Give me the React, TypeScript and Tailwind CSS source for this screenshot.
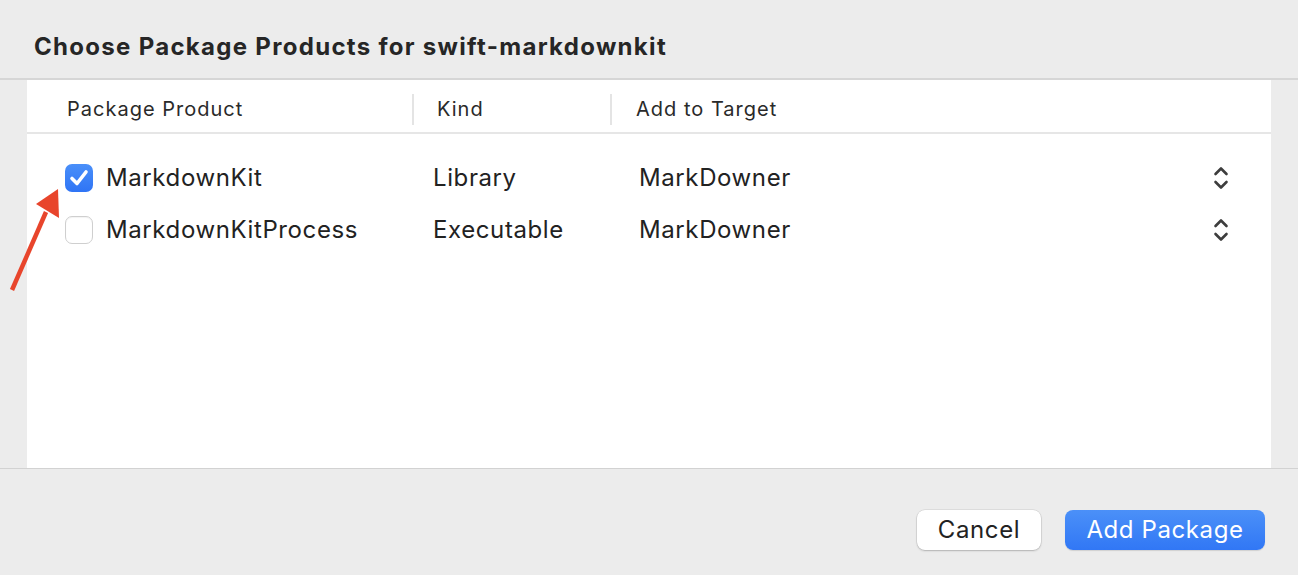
import React from "react";

const ROWS = [
  { name: "MarkdownKit", kind: "Library", target: "MarkDowner", checked: true },
  { name: "MarkdownKitProcess", kind: "Executable", target: "MarkDowner", checked: false },
];

const Checkbox: React.FC<{ checked: boolean }> = ({ checked }) =>
  checked ? (
    <div className="w-[28px] h-[28px] rounded-[7px] bg-gradient-to-b from-[#4a8ff9] to-[#2f74f5] flex items-center justify-center">
      <svg width="22" height="20" viewBox="0 0 22 20" fill="none">
        <path d="M4 10.5 L9 15.5 L18 4" stroke="white" strokeWidth="3.6" strokeLinecap="round" strokeLinejoin="round" />
      </svg>
    </div>
  ) : (
    <div className="w-[28px] h-[28px] rounded-[7px] bg-white border border-[#cfcfcf] shadow-[inset_0_1px_1px_rgba(0,0,0,0.05)]" />
  );

const UpDown = () => (
  <svg width="18" height="28" viewBox="0 0 18 28" fill="none">
    <path d="M3.5 10 L9 4.5 L14.5 10" stroke="#3d3d3d" strokeWidth="2.6" strokeLinecap="round" strokeLinejoin="round" />
    <path d="M3.5 18 L9 23.5 L14.5 18" stroke="#3d3d3d" strokeWidth="2.6" strokeLinecap="round" strokeLinejoin="round" />
  </svg>
);

export default function App() {
  return (
    <div
      className="relative w-[1298px] h-[575px] bg-[#ececec] flex flex-col text-[#222222]"
      style={{ fontFamily: "Inter, 'Noto Sans', sans-serif" }}
    >
      <div className="pt-[33px] pl-[34px] h-[78px]">
        <h1 className="text-[24px] leading-[28px] font-bold tracking-[1.3px] text-[#262626]">
          Choose Package Products for swift-markdownkit
        </h1>
      </div>
      <div className="h-[2px] bg-[#d6d6d6]" />
      <div className="flex h-[388px]">
        <div className="w-[27px]" />
        <div className="w-[1244px] bg-white flex flex-col">
          <div className="flex items-center h-[54px] pt-[6px] border-b-2 border-[#e6e6e6] text-[20px] tracking-[1px] text-[#2a2a2a]">
            <div className="w-[385px] pl-[40px]">Package Product</div>
            <div className="w-[2px] h-[31px] bg-[#e4e4e4]" />
            <div className="w-[196px] pl-[23px]">Kind</div>
            <div className="w-[2px] h-[31px] bg-[#e4e4e4]" />
            <div className="pl-[24px]">Add to Target</div>
          </div>
          <div className="pt-[18px] flex flex-col">
            {ROWS.map((r) => (
              <div key={r.name} className="flex items-center h-[52px] text-[24px] tracking-[0.6px] text-[#222222]">
                <div className="w-[385px] pl-[38px] flex items-center gap-[13px]">
                  <Checkbox checked={r.checked} />
                  <span>{r.name}</span>
                </div>
                <div className="w-[227px] pl-[21px]">{r.kind}</div>
                <div className="flex-1">{r.target}</div>
                <div className="w-[44px] mr-[28px] flex justify-center">
                  <UpDown />
                </div>
              </div>
            ))}
          </div>
        </div>
        <div className="flex-1" />
      </div>
      <div className="h-[1px] bg-[#d2d2d2]" />
      <div className="flex justify-end gap-[24px] pt-[41px] pr-[33px]">
        <button className="w-[124px] h-[40px] rounded-[8px] bg-white text-[24px] tracking-[0.6px] text-[#222222] shadow-[0_0_0_0.5px_rgba(0,0,0,0.12),0_1px_2px_rgba(0,0,0,0.2)]">
          Cancel
        </button>
        <button className="w-[200px] h-[40px] rounded-[8px] bg-gradient-to-b from-[#4b90f8] to-[#3177f5] text-[24px] tracking-[0.6px] text-white shadow-[0_1px_1px_rgba(0,0,0,0.12)]">
          Add Package
        </button>
      </div>
      <svg className="absolute left-0 top-0 pointer-events-none" width="100" height="300" viewBox="0 0 100 300">
        <line x1="12" y1="290" x2="46" y2="212" stroke="#e8452c" strokeWidth="4.5" strokeLinecap="butt" />
        <polygon points="58,189 36,204 59,218" fill="#e8452c" />
      </svg>
    </div>
  );
}
